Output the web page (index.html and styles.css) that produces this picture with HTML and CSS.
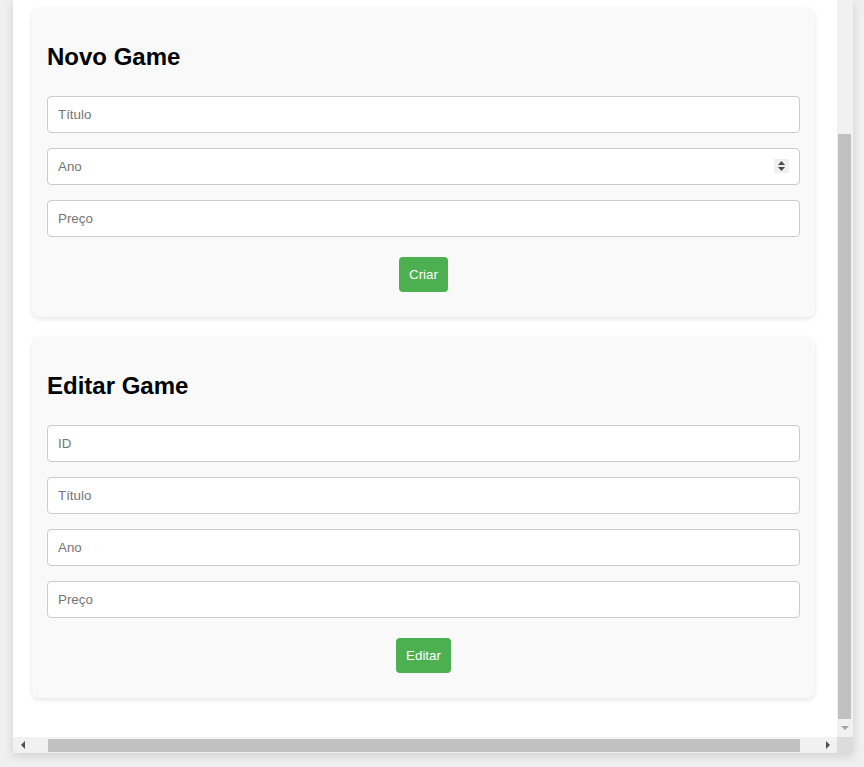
FILE: index.html
```html
<!DOCTYPE html>
<html lang="pt">
<head>
<meta charset="utf-8">
<title>Games</title>
<link rel="stylesheet" href="styles.css">
</head>
<body>
<div class="window">
  <div class="viewport">
    <section class="card">
      <h2 class="card-title">Novo Game</h2>
      <input class="field" type="text" placeholder="Título">
      <div class="number-wrap">
        <input class="field field-number" type="number" placeholder="Ano">
        <span class="spinner" aria-hidden="true">
          <svg width="15" height="14" viewBox="0 0 15 14"><path d="M4 6H11L7.5 2Z" fill="#4a4a4a"/><path d="M4 8H11L7.5 12Z" fill="#4a4a4a"/></svg>
        </span>
      </div>
      <input class="field" type="text" placeholder="Preço">
      <div class="actions"><button class="btn">Criar</button></div>
    </section>
    <section class="card">
      <h2 class="card-title">Editar Game</h2>
      <input class="field" type="text" placeholder="ID">
      <input class="field" type="text" placeholder="Título">
      <input class="field" type="text" placeholder="Ano">
      <input class="field" type="text" placeholder="Preço">
      <div class="actions"><button class="btn">Editar</button></div>
    </section>
  </div>
  <div class="vscroll">
    <div class="vthumb"></div>
    <div class="vbtn">
      <svg width="8" height="4" viewBox="0 0 8 4"><path d="M0 0H8L4 4Z" fill="#a3a3a3"/></svg>
    </div>
  </div>
  <div class="hscroll">
    <div class="hbtn">
      <svg width="4" height="8" viewBox="0 0 4 8"><path d="M4 0V8L0 4Z" fill="#505050"/></svg>
    </div>
    <div class="hthumb"></div>
    <div class="hbtn hbtn-right">
      <svg width="4" height="8" viewBox="0 0 4 8"><path d="M0 0V8L4 4Z" fill="#505050"/></svg>
    </div>
  </div>
  <div class="corner"></div>
</div>
</body>
</html>
```

FILE: styles.css
```css
html, body {
  margin: 0;
  padding: 0;
}

body {
  background: #f0f0f0;
  height: 767px;
  overflow: hidden;
  font-family: "Liberation Sans", Arial, sans-serif;
}

.window {
  margin-left: 13px;
  width: 840px;
  height: 753px;
  background: #ffffff;
  box-shadow: 0 3px 10px rgba(0, 0, 0, 0.14);
  display: grid;
  grid-template-columns: 824px 16px;
  grid-template-rows: 737px 16px;
}

.viewport {
  overflow: hidden;
  padding: 8px 22px 0 19px;
}

.card {
  background: #f9f9f9;
  border-radius: 8px;
  box-shadow: 0 2px 5px rgba(0, 0, 0, 0.1);
  padding: 15px;
  margin-bottom: 20px;
}

.card-title {
  margin: 20px 0 25px;
  font-size: 24px;
  line-height: 28px;
  font-weight: bold;
  color: #000;
}

.field {
  display: block;
  box-sizing: border-box;
  width: 100%;
  height: 37px;
  margin: 0 0 15px;
  padding: 10px;
  border: 1px solid #cccccc;
  border-radius: 4px;
  background: #ffffff;
  font-family: "Liberation Sans", Arial, sans-serif;
  font-size: 13.333px;
  color: #000;
}

.field::placeholder {
  color: #757575;
}

.number-wrap {
  position: relative;
}

.field-number {
  -moz-appearance: textfield;
}

.field-number::-webkit-inner-spin-button,
.field-number::-webkit-outer-spin-button {
  -webkit-appearance: none;
  margin: 0;
}

.spinner {
  position: absolute;
  right: 11px;
  top: 11px;
  width: 15px;
  height: 14px;
  background: #efefef;
  display: block;
}

.spinner svg {
  display: block;
}

.actions {
  text-align: center;
  margin-top: 20px;
  margin-bottom: 10px;
  line-height: 0;
}

.btn {
  display: inline-block;
  height: 35px;
  padding: 0 10px;
  border: none;
  border-radius: 4px;
  background: #4caf50;
  color: #ffffff;
  font-family: "Liberation Sans", Arial, sans-serif;
  font-size: 13.333px;
  line-height: 35px;
  cursor: pointer;
}

.vscroll {
  background: #f1f1f1;
  display: flex;
  flex-direction: column;
}

.vthumb {
  margin: 134px 2px 0 1px;
  height: 585px;
  background: #c1c1c1;
}

.vbtn {
  height: 18px;
  display: flex;
  align-items: center;
  justify-content: center;
  padding-right: 1px;
}

.vbtn svg {
  display: block;
}

.hscroll {
  background: #f1f1f1;
  display: flex;
  align-items: flex-start;
}

.hbtn {
  width: 19px;
  height: 15px;
  display: flex;
  align-items: center;
  justify-content: center;
}

.hbtn svg {
  display: block;
}

.hthumb {
  margin: 2px 0 0 16px;
  width: 752px;
  height: 13px;
  background: #c1c1c1;
}

.hbtn-right {
  margin-left: 18px;
  width: 19px;
}

.corner {
  background: #dcdcdc;
}
```
